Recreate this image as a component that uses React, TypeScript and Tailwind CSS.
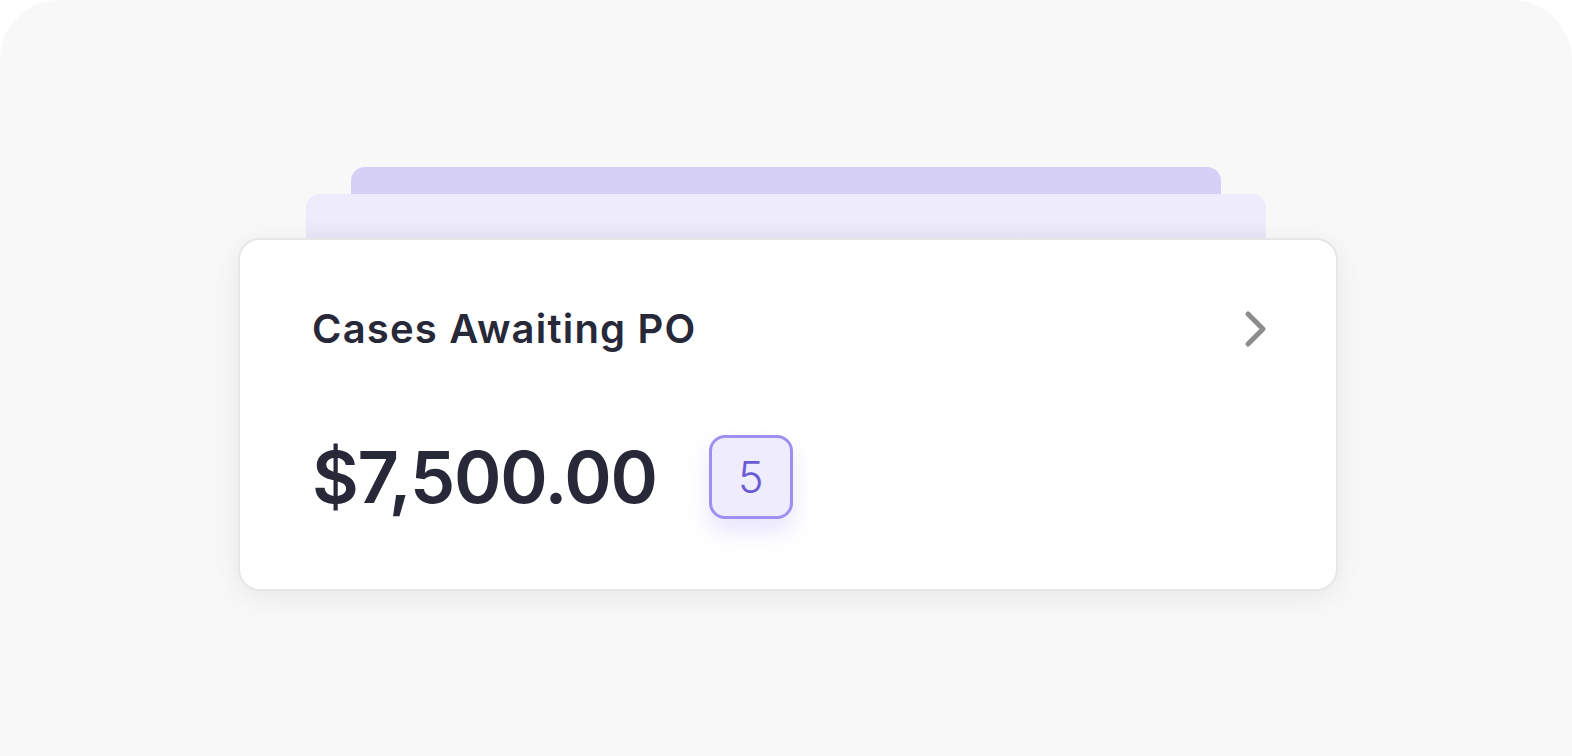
export default function App() {
  return (
    <div className="h-[756px] w-full overflow-hidden bg-white">
      <div
        className="flex h-full flex-col items-center rounded-t-[60px] bg-[#f8f8f8] pt-[167px]"
        style={{ fontFamily: 'Inter, "Noto Sans", sans-serif' }}
      >
        {/* stacked tabs behind the card */}
        <div className="h-[27px] w-[870px] rounded-t-[14px] bg-[#d6d0f6]" />
        <div className="h-[44px] w-[960px] rounded-t-[14px] bg-gradient-to-b from-[#eeebfc] from-60% to-[#e8e5f6]" />

        {/* main card */}
        <div className="ml-[4px] w-[1100px] rounded-[22px] border-2 border-[#e6e6e6] bg-white px-[72px] pt-[69px] pb-[70px] shadow-[0_6px_28px_rgba(0,0,0,0.07)]">
          <div className="flex items-center justify-between">
            <h2 className="text-[40px] leading-none font-semibold tracking-[0.03em] text-[#272838]">
              Cases Awaiting PO
            </h2>
            <svg width="26" height="40" viewBox="0 0 26 40" fill="none" className="mr-[-5px]">
              <path d="M5 5L20 20L5 35" stroke="#8c8c8c" strokeWidth="5" strokeLinecap="round" strokeLinejoin="round" />
            </svg>
          </div>

          <div className="mt-[86px] flex items-center gap-[52px]">
            <span className="text-[72px] leading-none font-semibold tracking-[-0.017em] text-[#272838]">
              $7,500.00
            </span>
            <div className="flex h-[84px] w-[84px] items-center justify-center rounded-[16px] border-[3px] border-[#9d90f0] bg-[#efecfd] text-[43px] leading-none font-light text-[#6a5bd4] shadow-[0_12px_22px_rgba(124,108,240,0.18)]">
              5
            </div>
          </div>
        </div>
      </div>
    </div>
  )
}
